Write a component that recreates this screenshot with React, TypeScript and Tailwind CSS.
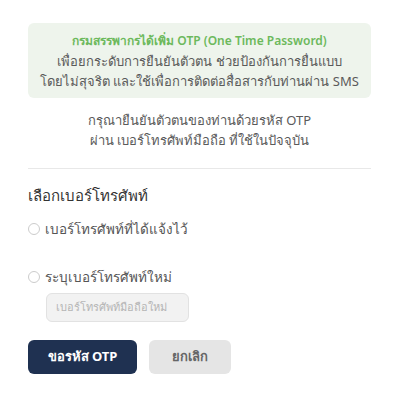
export default function App() {
  return (
    <div className="w-[406px] h-[402px] bg-white pl-[28px] pt-[23px]" style={{ fontFamily: '"Noto Sans", "Liberation Sans", sans-serif' }}>
      <div className="w-[343px]">
        <div className="bg-[#eef4ec] rounded-[6px] h-[75px] flex flex-col items-center justify-center text-[13px] leading-[20px] text-[#5a5a5a]">
          <div className="text-[#6cb95c] font-semibold text-[12px]">กรมสรรพากรได้เพิ่ม OTP (One Time Password)</div>
          <div>เพื่อยกระดับการยืนยันตัวตน ช่วยป้องกันการยื่นแบบ</div>
          <div>โดยไม่สุจริต และใช้เพื่อการติดต่อสื่อสารกับท่านผ่าน SMS</div>
        </div>
        <div className="mt-[12px] text-center text-[13px] leading-[20px] text-[#5a5a5a]">
          <div>กรุณายืนยันตัวตนของท่านด้วยรหัส OTP</div>
          <div>ผ่าน เบอร์โทรศัพท์มือถือ ที่ใช้ในปัจจุบัน</div>
        </div>
        <div className="mt-[18px] border-t border-[#e8e8e8]" />
        <div className="mt-[15px] text-[15px] leading-[22px] text-[#333]">เลือกเบอร์โทรศัพท์</div>
        <label className="mt-[13px] flex items-center gap-[5px] text-[13.5px] leading-[20px] text-[#555]">
          <span className="w-[12px] h-[12px] rounded-full border border-[#ccc] bg-white" />
          <span>เบอร์โทรศัพท์ที่ได้แจ้งไว้</span>
        </label>
        <label className="mt-[28px] flex items-center gap-[5px] text-[13.5px] leading-[20px] text-[#555]">
          <span className="w-[12px] h-[12px] rounded-full border border-[#ccc] bg-white" />
          <span>ระบุเบอร์โทรศัพท์ใหม่</span>
        </label>
        <div className="mt-[6px] ml-[18px] w-[143px] h-[29px] rounded-[6px] border border-[#e2e2e2] bg-[#f2f2f2] flex items-center pl-[9px] text-[11px] text-[#b5b5b5]">
          เบอร์โทรศัพท์มือถือใหม่
        </div>
        <div className="mt-[18px] flex gap-[12px]">
          <button className="w-[109px] h-[34px] rounded-[6px] bg-[#1f3151] text-white text-[13px] font-bold">ขอรหัส OTP</button>
          <button className="w-[82px] h-[34px] rounded-[6px] bg-[#e5e5e5] text-[#666] text-[13px] font-bold">ยกเลิก</button>
        </div>
      </div>
    </div>
  );
}
